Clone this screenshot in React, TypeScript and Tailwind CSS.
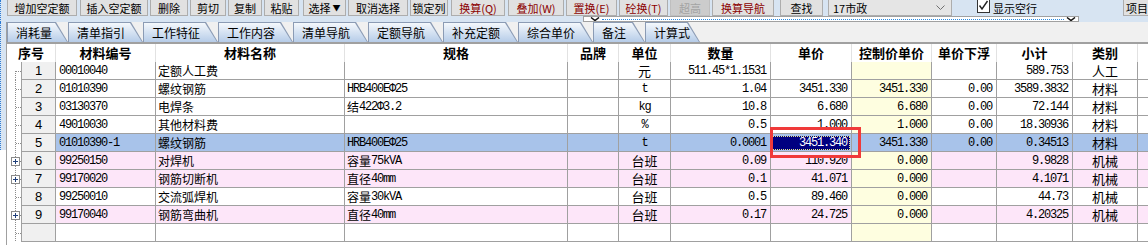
import React from "react";

const CJK = "font-['Noto_Sans_CJK_SC','Noto_Sans',sans-serif]";
const MONO = "font-['Liberation_Mono','Noto_Sans_CJK_SC',monospace] text-[12px] tracking-[-1.2px]";

type Btn = { label: string; cls: string; red?: boolean; disabled?: boolean };

const buttons: Btn[] = [
  { label: "增加空定额", cls: "ml-[6px] w-[70px]" },
  { label: "插入空定额", cls: "ml-[3px] w-[68px]" },
  { label: "删除", cls: "ml-[2px] w-[38px]" },
  { label: "剪切", cls: "ml-[2px] w-[36px]" },
  { label: "复制", cls: "ml-[2px] w-[34px]" },
  { label: "粘贴", cls: "ml-[2px] w-[35px]" },
  { label: "选择▼", cls: "ml-[4px] w-[43px]" },
  { label: "取消选择", cls: "ml-[2px] w-[60px]" },
  { label: "锁定列", cls: "ml-[2px] w-[38px]" },
  { label: "换算(Q)", cls: "ml-[3px] w-[54px]", red: true },
  { label: "叠加(W)", cls: "ml-[3px] w-[56px]", red: true },
  { label: "置换(E)", cls: "ml-[2px] w-[51px]", red: true },
  { label: "砼换(T)", cls: "ml-[2px] w-[49px]", red: true },
  { label: "超高", cls: "ml-[2px] w-[40px]", disabled: true },
  { label: "换算导航", cls: "ml-[2px] w-[62px]", red: true },
  { label: "查找", cls: "ml-[6px] w-[43px]" },
];

const tabs = [
  { label: "消耗量", cls: "w-[61px]" },
  { label: "清单指引", cls: "w-[75px]" },
  { label: "工作特征", cls: "w-[75px]" },
  { label: "工作内容", cls: "w-[75px]" },
  { label: "清单导航", cls: "w-[75px]" },
  { label: "定额导航", cls: "w-[75px]" },
  { label: "补充定额", cls: "w-[75px]" },
  { label: "综合单价", cls: "w-[75px]" },
  { label: "备注", cls: "w-[52px]" },
  { label: "计算式", cls: "w-[55px]" },
];

const headers = ["材料编号", "材料名称", "规格", "品牌", "单位", "数量", "单价", "控制价单价", "单价下浮", "小计", "类别", ""];

type Row = {
  n: number;
  code: string;
  name: string;
  spec: string;
  unit: string;
  qty: string;
  price: string;
  ctrl: string;
  float: string;
  sub: string;
  kind: string;
  tone: "white" | "pink" | "sel";
  plus?: boolean;
};

const rows: Row[] = [
  { n: 1, code: "00010040", name: "定额人工费", spec: "", unit: "元", qty: "511.45*1.1531", price: "", ctrl: "", float: "", sub: "589.753", kind: "人工", tone: "white" },
  { n: 2, code: "01010390", name: "螺纹钢筋", spec: "HRB400EΦ25", unit: "t", qty: "1.04", price: "3451.330", ctrl: "3451.330", float: "0.00", sub: "3589.3832", kind: "材料", tone: "white" },
  { n: 3, code: "03130370", name: "电焊条", spec: "结422Φ3.2", unit: "kg", qty: "10.8", price: "6.680", ctrl: "6.680", float: "0.00", sub: "72.144", kind: "材料", tone: "white" },
  { n: 4, code: "49010030", name: "其他材料费", spec: "", unit: "%", qty: "0.5", price: "1.000", ctrl: "1.000", float: "0.00", sub: "18.30936", kind: "材料", tone: "white" },
  { n: 5, code: "01010390-1", name: "螺纹钢筋", spec: "HRB400EΦ25", unit: "t", qty: "0.0001", price: "3451.340", ctrl: "3451.330", float: "0.00", sub: "0.34513", kind: "材料", tone: "sel" },
  { n: 6, code: "99250150", name: "对焊机", spec: "容量75kVA", unit: "台班", qty: "0.09", price: "110.920", ctrl: "0.000", float: "", sub: "9.9828", kind: "机械", tone: "pink", plus: true },
  { n: 7, code: "99170020", name: "钢筋切断机", spec: "直径40mm", unit: "台班", qty: "0.1", price: "41.071", ctrl: "0.000", float: "", sub: "4.1071", kind: "机械", tone: "pink", plus: true },
  { n: 8, code: "99250010", name: "交流弧焊机", spec: "容量30kVA", unit: "台班", qty: "0.5", price: "89.460", ctrl: "0.000", float: "", sub: "44.73", kind: "机械", tone: "white" },
  { n: 9, code: "99170040", name: "钢筋弯曲机", spec: "直径40mm", unit: "台班", qty: "0.17", price: "24.725", ctrl: "0.000", float: "", sub: "4.20325", kind: "机械", tone: "pink", plus: true },
];

const toneBg = { white: "bg-white", pink: "bg-[#fde6f9]", sel: "bg-[#a8c3ea]" };

const Mix = ({ s }: { s: string }) => {
  const parts = s.split(/([\u4e00-\u9fff]+)/);
  return (
    <>
      {parts.map((p, i) =>
        /[\u4e00-\u9fff]/.test(p) ? (
          <span key={i} className={`${CJK} text-[12px] tracking-normal`}>
            {p}
          </span>
        ) : (
          <span key={i}>{p}</span>
        )
      )}
    </>
  );
};

const cellBase = "h-[18px] border-r border-b border-[#a0a0a0] flex items-center overflow-hidden whitespace-nowrap";

const TreeCell = ({ first, plus }: { first?: boolean; plus?: boolean }) => (
  <div className="h-[18px] border-r border-[#a0a0a0] bg-white">
    <svg width="14" height="18" className="block">
      <line x1="8.5" y1={first ? 9 : 0} x2="8.5" y2="18" stroke="#8c8c8c" strokeDasharray="1 1" />
      <line x1="9" y1="9.5" x2="14" y2="9.5" stroke="#8c8c8c" strokeDasharray="1 1" />
      {plus && (
        <>
          <rect x="4.5" y="5.5" width="8" height="8" fill="#fff" stroke="#8a8a8a" />
          <line x1="6" y1="9.5" x2="11" y2="9.5" stroke="#1f3f7a" />
          <line x1="8.5" y1="7" x2="8.5" y2="12" stroke="#1f3f7a" />
        </>
      )}
    </svg>
  </div>
);

const GridRow = ({ r }: { r: Row }) => {
  const bg = toneBg[r.tone];
  const ctrlBg = r.tone === "sel" ? bg : "bg-[#fefee0]";
  const num = `${cellBase} ${bg} ${MONO} justify-end pr-[4px]`;
  return (
    <>
      <TreeCell first={r.n === 1} plus={r.plus} />
      <div className={`${cellBase} bg-[#f0f0f0] justify-center text-[13px] font-['Liberation_Sans',sans-serif]`}>{r.n}</div>
      <div className={`${cellBase} ${bg} ${MONO} pl-[3px]`}>{r.code}</div>
      <div className={`${cellBase} ${bg} ${CJK} text-[12px] pl-[2px]`}>{r.name}</div>
      <div className={`${cellBase} ${bg} ${MONO} pl-[2px]`}>
        <Mix s={r.spec} />
      </div>
      <div className={`${cellBase} ${bg}`} />
      <div className={`${cellBase} ${bg} justify-center ${/[\u4e00-\u9fff]/.test(r.unit) ? `${CJK} text-[13px]` : MONO}`}>{r.unit}</div>
      <div className={num}>{r.qty}</div>
      {r.tone === "sel" ? (
        <div className={`${cellBase} ${bg} px-[1px] pt-[2px] pb-[1px]`}>
          <div className={`h-full w-full bg-[#000080] text-white border border-dotted border-[#e6e68a] flex items-center justify-end pr-[2px] ${MONO}`}>
            {r.price}
          </div>
        </div>
      ) : (
        <div className={num}>{r.price}</div>
      )}
      <div className={`${cellBase} ${ctrlBg} ${MONO} justify-end pr-[4px]`}>{r.ctrl}</div>
      <div className={num}>{r.float}</div>
      <div className={num}>{r.sub}</div>
      <div className={`${cellBase} ${bg} ${CJK} text-[13px] justify-center`}>{r.kind}</div>
      <div className={`${cellBase} ${bg}`} />
    </>
  );
};

const EmptyRow = () => (
  <>
    <TreeCell />
    <div className={`${cellBase} bg-[#f0f0f0]`} />
    <div className={`${cellBase} bg-white`} />
    <div className={`${cellBase} bg-white`} />
    <div className={`${cellBase} bg-white`} />
    <div className={`${cellBase} bg-white`} />
    <div className={`${cellBase} bg-white`} />
    <div className={`${cellBase} bg-white`} />
    <div className={`${cellBase} bg-white`} />
    <div className={`${cellBase} bg-[#fefee0]`} />
    <div className={`${cellBase} bg-white`} />
    <div className={`${cellBase} bg-white`} />
    <div className={`${cellBase} bg-white`} />
    <div className={`${cellBase} bg-white`} />
  </>
);

export default function App() {
  return (
    <div className={`relative w-[1148px] h-[245px] overflow-hidden bg-[#f0f0f0] text-black ${CJK}`}>
      {/* toolbar */}
      <div className="h-[22px] bg-[#d7e4f2] border-l border-dotted border-[#2b7bd6] flex flex-col">
        <div className="h-[16px] flex items-start">
          {buttons.map((b) => (
            <div
              key={b.label}
              className={`${b.cls} shrink-0 h-[16px] border-x border-b flex justify-center text-[11px] leading-[16px] whitespace-nowrap ${
                b.disabled
                  ? "bg-[#cccccc] border-[#bfbfbf] text-[#a3a3a3]"
                  : b.red
                  ? "bg-[#e1e1e1] border-[#adadad] text-[#8b0000]"
                  : "bg-[#e1e1e1] border-[#adadad] text-black"
              }`}
            >
              {b.label === "选择▼" ? (
                <>
                  选择<span className="ml-[2px] text-[8px] leading-[16px]">▼</span>
                </>
              ) : (
                b.label
              )}
            </div>
          ))}
          <div className="ml-[5px] w-[124px] shrink-0 h-[16px] border-x border-b border-[#adadad] bg-[#e5e5e5] flex items-start pl-[4px] pr-[6px] text-[11px] leading-[16px]">
            <span className="flex-1">17市政</span>
            <svg width="9" height="6" className="mt-[5px]">
              <path d="M0.5 0.5 L4.5 4.5 L8.5 0.5" stroke="#707070" fill="none" />
            </svg>
          </div>
          <div className="ml-[25px] shrink-0 w-[13px] h-[13px] border-x border-b border-[#333] bg-white">
            <svg width="11" height="12" className="block">
              <path d="M1.5 5.5 L4 9 L9.5 1" stroke="#222" strokeWidth="1.4" fill="none" />
            </svg>
          </div>
          <span className="ml-[3px] shrink-0 text-[11px] leading-[16px]">显示空行</span>
          <div className="ml-[86px] shrink-0 w-[40px] h-[16px] border-x border-b border-[#adadad] bg-[#e1e1e1] pl-[2px] text-[11px] leading-[16px] whitespace-nowrap">
            项目
          </div>
        </div>
        <div className="ml-[582px] w-[496px] h-[6px] border border-[#a0a0a0] bg-white flex items-center">
          <svg width="10" height="4" className="ml-[6px] mr-[2px]">
            <path d="M1 0.5 L5 3.5 L9 0.5" stroke="#111" strokeWidth="1.5" fill="none" />
          </svg>
          <div className="flex-1 border-t border-dotted border-[#2b8ae0]" />
          <svg width="10" height="4" className="ml-[2px] mr-[2px]">
            <path d="M1 0.5 L5 3.5 L9 0.5" stroke="#111" strokeWidth="1.5" fill="none" />
          </svg>
        </div>
      </div>

      <div className="flex h-[223px]">
        {/* left strip */}
        <div className="w-[6px] flex flex-col">
          <div className="h-[128px] bg-[#d7e4f2] border-l border-dotted border-[#2b7bd6]" />
          <div className="flex-1 bg-white" />
        </div>

        {/* panel */}
        <div className="flex-1 border-l border-[#a0a0a0] flex flex-col overflow-hidden">
          <div className="h-[20px] flex bg-[#f0f0f0]">
            {tabs.map((t) => (
              <div
                key={t.label}
                className={`${t.cls} relative shrink-0 h-[20px] bg-[#8b9bb4] [clip-path:polygon(0_0,calc(100%_-_12px)_0,100%_100%,0_100%)]`}
              >
                <div className="absolute left-[1px] top-[1px] right-[1px] bottom-0 bg-linear-to-b from-[#f4f8fc] to-[#b6cce8] [clip-path:polygon(0_0,calc(100%_-_12px)_0,100%_100%,0_100%)] flex items-center pl-[8px] text-[12px] whitespace-nowrap">
                  {t.label}
                </div>
              </div>
            ))}
          </div>
          <div className="h-[2px] bg-[#a0a0a0]" />

          <div className="grid grid-cols-[15px_34px_100px_189px_223px_51px_52px_100px_81px_80px_65px_76px_65px_60px] w-[1191px]">
            <div className="col-span-2 h-[18px] bg-white border-r border-[#e2e2e2] flex items-center justify-center text-[13px] font-bold">
              序号
            </div>
            {headers.map((h, i) => (
              <div
                key={i}
                className="h-[18px] bg-white border-r border-[#e2e2e2] flex items-center justify-center text-[13px] font-bold whitespace-nowrap"
              >
                {h}
              </div>
            ))}
            {rows.map((r) => (
              <GridRow key={r.n} r={r} />
            ))}
            <EmptyRow />
          </div>
          <div className="flex-1 bg-white" />
        </div>
      </div>

      {/* red highlight annotation */}
      <div className="absolute left-[770px] top-[127px] w-[91px] h-[31px] border-[3px] border-[#f03a3a]" />
    </div>
  );
}
